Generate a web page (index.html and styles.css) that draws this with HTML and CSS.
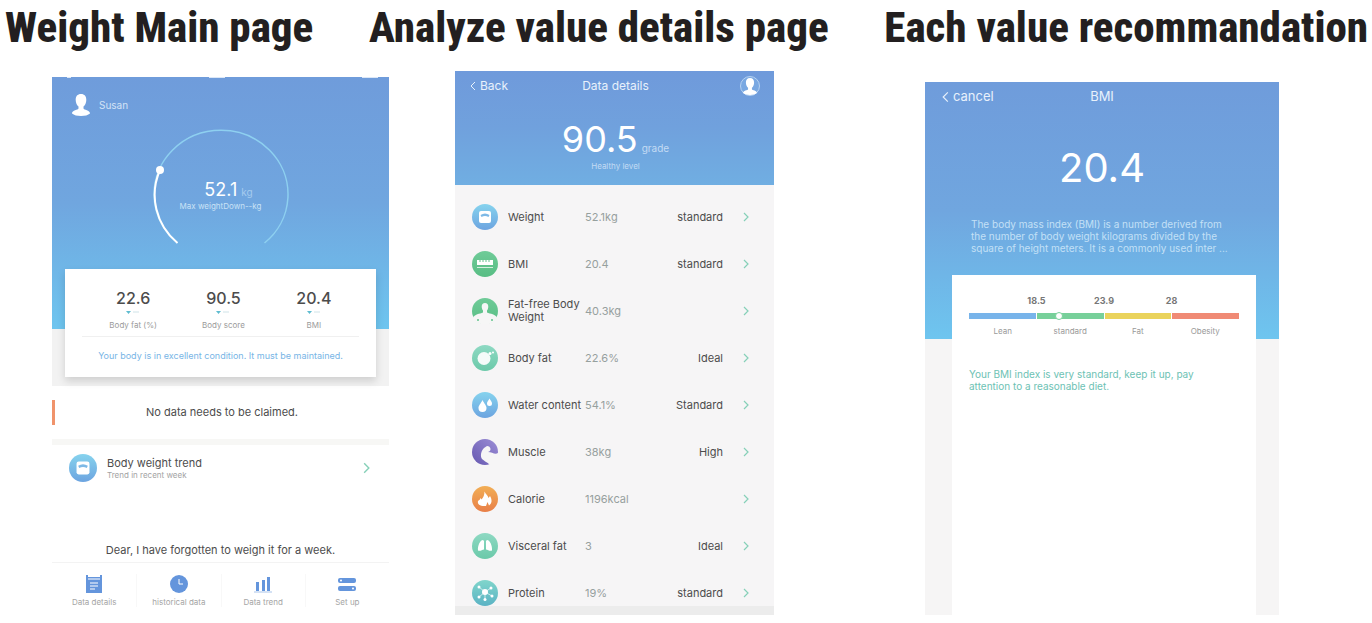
FILE: index.html
```html
<!DOCTYPE html>
<html lang="en">
<head>
  <meta charset="UTF-8" />
  <meta name="viewport" content="width=device-width, initial-scale=1.0" />
  <title>Weight app screens</title>
  <link rel="stylesheet" href="styles.css">
</head>
<body>
  <!-- shared shapes -->
  <svg class="defs" width="0" height="0">
    <defs>
      <linearGradient id="blue" x1="0" y1="0" x2="0" y2="1"><stop offset="0" stop-color="#86d3ee"/><stop offset="1" stop-color="#6ca4e0"/></linearGradient>
      <linearGradient id="green" x1="0" y1="0" x2="0" y2="1"><stop offset="0" stop-color="#6fcb98"/><stop offset="1" stop-color="#58bd84"/></linearGradient>
      <linearGradient id="mint" x1="0" y1="0" x2="0" y2="1"><stop offset="0" stop-color="#8ed9c3"/><stop offset="1" stop-color="#6bc9a9"/></linearGradient>
      <linearGradient id="purple" x1="1" y1="0" x2="0" y2="1"><stop offset="0" stop-color="#9c8ed6"/><stop offset="1" stop-color="#6658b0"/></linearGradient>
      <linearGradient id="orange" x1="0" y1="0" x2="0" y2="1"><stop offset="0" stop-color="#f2ae55"/><stop offset="1" stop-color="#e87f48"/></linearGradient>
      <linearGradient id="teal" x1="0" y1="0" x2="0" y2="1"><stop offset="0" stop-color="#80d5cb"/><stop offset="1" stop-color="#5bb3c4"/></linearGradient>
      <symbol id="person" viewBox="0 0 18 22">
        <path d="M9 0C5.500 0 3.600 2.200 3.700 6c0 3 1.300 5.200 2.800 6.600v1.900C6.200 16 0 16 0 19.500 2 21.200 5 22 9 22s7-.8 9-2.500C18 16 11.800 16 11.500 14.500v-1.900C13 11.200 14.300 9 14.300 6 14.400 2.200 12.500 0 9 0z"/>
      </symbol>
      <symbol id="scale" viewBox="0 0 26 26">
        <circle cx="13" cy="13" r="13" fill="url(#blue)"/>
        <rect x="7" y="7" width="12" height="12" rx="2" fill="#fff"/>
        <path d="M8.500 11q4.500-3 9 0l-1 2q-3.500-2-7 0z" fill="#7db9e6"/>
      </symbol>
      <symbol id="chevron" viewBox="0 0 6 10">
        <path d="M1 1l4 4-4 4" fill="none" stroke="currentColor" stroke-width="1.200"/>
      </symbol>
    </defs>
  </svg>

  <header class="titles">
    <h2>Weight Main page</h2>
    <h2>Analyze value details page</h2>
    <h2>Each value recommandation</h2>
  </header>

  <main class="screens">

    <!-- main page -->
    <section class="screen-main">
      <div class="hero">
        <div class="status-bar"><i></i><i></i><i></i></div>
        <div class="user">
          <svg width="18" height="22" fill="#fff"><use href="#person"/></svg>
          <span>Susan</span>
        </div>
        <div class="gauge">
          <svg width="138" height="116" viewBox="0 0 138 116" fill="none">
            <path d="M25.500 114A67 64 0 1 1 112.500 114" stroke="#8ed0f0" stroke-width="1.500"/>
            <path d="M25.500 114A67 64 0 0 1 8 41" stroke="#fff" stroke-width="2"/>
            <circle cx="8" cy="41" r="4" fill="#fff"/>
          </svg>
          <div class="gauge-text">
            <p class="gauge-value">52.1<span>kg</span></p>
            <p class="gauge-note">Max weightDown--kg</p>
          </div>
        </div>
      </div>

      <div class="card-area">
        <div class="card">
          <div class="stats">
            <div class="stat">
              <strong>22.6</strong>
              <svg width="16" height="4"><path d="M1 1h5L3.500 4z" fill="#5fbcd0"/><path d="M8 2h6" stroke="#cfe3e8"/></svg>
              <span>Body fat (%)</span>
            </div>
            <div class="stat">
              <strong>90.5</strong>
              <svg width="16" height="4"><path d="M1 1h5L3.500 4z" fill="#5fbcd0"/><path d="M8 2h6" stroke="#cfe3e8"/></svg>
              <span>Body score</span>
            </div>
            <div class="stat">
              <strong>20.4</strong>
              <svg width="16" height="4"><path d="M1 1h5L3.500 4z" fill="#5fbcd0"/><path d="M8 2h6" stroke="#cfe3e8"/></svg>
              <span>BMI</span>
            </div>
          </div>
          <p class="card-note">Your body is in excellent condition. It must be maintained.</p>
        </div>
      </div>

      <p class="claim">No data needs to be claimed.</p>

      <a class="trend" href="#">
        <svg width="28" height="28"><use href="#scale"/></svg>
        <span class="trend-text"><b>Body weight trend</b><small>Trend in recent week</small></span>
        <svg class="chevron" width="7" height="12"><use href="#chevron"/></svg>
      </a>

      <p class="reminder">Dear, I have forgotten to weigh it for a week.</p>

      <nav class="tabs">
        <a href="#">
          <svg width="18" height="20" viewBox="0 0 18 20"><path d="M1 1h2v2h12V1h2v18H1z" fill="#6495dc"/><path d="M3 5h12M5 9h8M5 12h8M5 15h5" stroke="#fff" stroke-width="1.200"/></svg>
          Data details
        </a>
        <a href="#">
          <svg width="18" height="20" viewBox="0 0 18 20"><circle cx="9" cy="10" r="9" fill="#6495dc"/><path d="M9 5v5h4" fill="none" stroke="#fff"/></svg>
          historical data
        </a>
        <a href="#">
          <svg width="18" height="20" viewBox="0 0 18 20"><path d="M2 8h3v9H2zM8 6h3v11H8zM13 3h3v14h-3z" fill="#6495dc"/><path d="M0 18h18" stroke="#a9c4ea"/></svg>
          Data trend
        </a>
        <a href="#">
          <svg width="20" height="20" viewBox="0 0 20 20"><rect x="1" y="4" width="18" height="5" rx="2" fill="#6495dc"/><rect x="1" y="12" width="18" height="5" rx="2" fill="#6495dc"/><circle cx="4" cy="6.500" r="1" fill="#fff"/><circle cx="16" cy="14.500" r="1" fill="#fff"/></svg>
          Set up
        </a>
      </nav>
    </section>

    <!-- value details -->
    <section class="screen-details">
      <div class="hero">
        <div class="topbar">
          <button type="button"><svg width="6" height="10" viewBox="0 0 6 10"><path d="M5 1L1 5l4 4" fill="none" stroke="currentColor"/></svg>Back</button>
          <h3>Data details</h3>
          <svg class="profile" width="22" height="22" viewBox="0 0 22 22"><circle cx="11" cy="11" r="9.500" fill="#79a8e2" stroke="#b6d2f1"/><use href="#person" x="4" y="3" width="14" height="17" fill="#fff"/></svg>
        </div>
        <p class="score">90.5<span>grade</span></p>
        <p class="level">Healthy level</p>
      </div>

      <ul class="values">
        <li><a href="#">
          <svg width="26" height="26"><use href="#scale"/></svg>
          <span>Weight</span><em>52.1kg</em><b>standard</b>
          <svg class="chevron" width="6" height="10"><use href="#chevron"/></svg>
        </a></li>
        <li><a href="#">
          <svg width="26" height="26" viewBox="0 0 26 26"><circle cx="13" cy="13" r="13" fill="url(#green)"/><path d="M5 9h16v5H5z" fill="#fff"/><path d="M8 9v2M11 9v2M14 9v2M17 9v2" stroke="#62c38d"/><path d="M5 16.500h16" stroke="#d5f0e0"/></svg>
          <span>BMI</span><em>20.4</em><b>standard</b>
          <svg class="chevron" width="6" height="10"><use href="#chevron"/></svg>
        </a></li>
        <li><a href="#">
          <svg width="26" height="26" viewBox="0 0 26 26"><circle cx="13" cy="13" r="13" fill="url(#green)"/><path d="M13 5c-2.500 0-3.600 1.800-3.200 4.500.2 1.500.8 2.500 1.200 3v2C8 16 2 16 1 20c2 4 7 6.500 12 6.500S23 24 25 20c-1-4-7-4-10-5.500v-2c.4-.5 1-1.500 1.200-3C16.600 6.800 15.500 5 13 5z" fill="#f6f6f6"/><circle cx="6" cy="22" r="1" fill="#62c38d"/><circle cx="20" cy="22" r="1" fill="#62c38d"/></svg>
          <span>Fat-free Body Weight</span><em>40.3kg</em><b></b>
          <svg class="chevron" width="6" height="10"><use href="#chevron"/></svg>
        </a></li>
        <li><a href="#">
          <svg width="26" height="26" viewBox="0 0 26 26"><circle cx="13" cy="13" r="13" fill="url(#mint)"/><circle cx="12" cy="13.500" r="6.500" fill="#f4fbf9"/><circle cx="18" cy="8.500" r="1.500" fill="#fff"/><circle cx="21" cy="7.500" r="1" fill="#fff"/></svg>
          <span>Body fat</span><em>22.6%</em><b>Ideal</b>
          <svg class="chevron" width="6" height="10"><use href="#chevron"/></svg>
        </a></li>
        <li><a href="#">
          <svg width="26" height="26" viewBox="0 0 26 26"><circle cx="13" cy="13" r="13" fill="url(#blue)"/><path d="M10.500 8c2 4 4 5.500 4 8a4 4 0 0 1-8 0c0-2.500 2-4 4-8zM17.500 6.500c1.200 2.500 2.500 3.300 2.500 5a2.500 2.500 0 0 1-5 0c0-1.700 1.300-2.500 2.500-5z" fill="#fff"/></svg>
          <span>Water content</span><em>54.1%</em><b>Standard</b>
          <svg class="chevron" width="6" height="10"><use href="#chevron"/></svg>
        </a></li>
        <li><a href="#">
          <svg width="26" height="26" viewBox="0 0 26 26"><circle cx="13" cy="13" r="13" fill="url(#purple)"/><path d="M26 14c-3 2-6-1-10-1 4-1 3-6-1-6l-3 2c-3 3-4 8-2 11 2 2 5 3 8 6h8z" fill="#f6f5f6"/></svg>
          <span>Muscle</span><em>38kg</em><b>High</b>
          <svg class="chevron" width="6" height="10"><use href="#chevron"/></svg>
        </a></li>
        <li><a href="#">
          <svg width="26" height="26" viewBox="0 0 26 26"><circle cx="13" cy="13" r="13" fill="url(#orange)"/><path d="M12.500 5.500c1 2.500 3.500 4 4 6.500l1.500-2c2 3.500 2.500 7-1 9.500l-1.500-3.500-1.500 4C8.500 20.500 5 18.500 6 15c1.500-1 2-1.500 2.500-3l1 1.500c2-2 3-5 3-8z" fill="#fff"/></svg>
          <span>Calorie</span><em>1196kcal</em><b></b>
          <svg class="chevron" width="6" height="10"><use href="#chevron"/></svg>
        </a></li>
        <li><a href="#">
          <svg width="26" height="26" viewBox="0 0 26 26"><circle cx="13" cy="13" r="13" fill="url(#mint)"/><path d="M11 7c-3 0-5.500 6-5 10.500 2 1 4-.5 6-1V8zM15 7c3 0 5.500 6 5 10.500-2 1-4-.5-6-1V8z" fill="#fff"/></svg>
          <span>Visceral fat</span><em>3</em><b>Ideal</b>
          <svg class="chevron" width="6" height="10"><use href="#chevron"/></svg>
        </a></li>
        <li><a href="#">
          <svg width="26" height="26" viewBox="0 0 26 26"><circle cx="13" cy="13" r="13" fill="url(#teal)"/><path d="M13 12L7 7M13 12l6-4M13 12l-6 5M13 12l7 4M13 12v7" stroke="#cdebee"/><g fill="#fff"><circle cx="13" cy="12" r="3"/><circle cx="7" cy="7" r="1.500"/><circle cx="19" cy="8" r="1.500"/><circle cx="7" cy="17" r="1.500"/><circle cx="20" cy="16" r="1.500"/><circle cx="13" cy="19.500" r="1.500"/></g></svg>
          <span>Protein</span><em>19%</em><b>standard</b>
          <svg class="chevron" width="6" height="10"><use href="#chevron"/></svg>
        </a></li>
      </ul>
    </section>

    <!-- BMI recommendation -->
    <section class="screen-bmi">
      <div class="hero">
        <div class="topbar">
          <button type="button"><svg width="7" height="12" viewBox="0 0 6 10"><path d="M5 1L1 5l4 4" fill="none" stroke="currentColor"/></svg>cancel</button>
          <h3>BMI</h3>
        </div>
        <p class="bmi-value">20.4</p>
        <p class="about">The body mass index (BMI) is a number derived from the number of body weight kilograms divided by the square of height meters. It is a commonly used inter ...</p>
      </div>
      <div class="advice-area">
        <div class="advice">
          <div class="limits"><span>18.5</span><span>23.9</span><span>28</span></div>
          <div class="range"><i class="lean"></i><i class="standard"></i><i class="fat"></i><i class="obesity"></i><span class="marker"></span></div>
          <div class="names"><span>Lean</span><span>standard</span><span>Fat</span><span>Obesity</span></div>
          <p>Your BMI index is very standard, keep it up, pay attention to a reasonable diet.</p>
        </div>
      </div>
    </section>

  </main>
</body>
</html>
```
FILE: styles.css
```css
* {
  box-sizing: border-box;
}
body {
  margin: 0;
  font-family: Inter, "Liberation Sans", sans-serif;
  background: #fff;
  color: #4c4c4c;
}
h2, h3, p, ul {
  margin: 0;
  padding: 0;
}
a {
  color: inherit;
  text-decoration: none;
}
svg {
  display: block;
  flex-shrink: 0;
}
.defs {
  position: absolute;
}

.titles {
  display: flex;
  justify-content: space-between;
  padding: 2px 4px 8px 5px;
}
.titles h2 {
  font-family: "Liberation Sans Narrow", "Roboto Condensed", "Open Sans Condensed", "DejaVu Sans Condensed", sans-serif;
  font-size: 43px;
  line-height: 50px;
  font-weight: 800;
  white-space: nowrap;
  color: #231f20;
}

.screens {
  display: grid;
  grid-template-columns: 52fr 337fr 66fr 319fr 151fr 354fr 93fr;
  align-items: start;
}
.screen-main {
  grid-column: 2;
  margin-top: 17px;
}
.screen-details {
  grid-column: 4;
  margin-top: 11px;
}
.screen-bmi {
  grid-column: 6;
  margin-top: 22px;
}
.hero {
  background: linear-gradient(#6f9cdb, #70a6df 50%, #6ec5ef);
  color: #fff;
}
.chevron {
  color: #86d0b8;
}

/* main page */
.screen-main .hero {
  padding-bottom: 84px;
}
.status-bar {
  display: flex;
  justify-content: space-between;
  padding: 0 11px 0 15px;
}
.status-bar i {
  width: 4px;
  height: 1px;
  background: #dbe7f7;
}
.status-bar i + i {
  width: 16px;
}
.user {
  display: flex;
  align-items: center;
  gap: 9px;
  padding: 16px 20px 0;
  font-size: 10px;
  line-height: 22px;
  color: #d3e3f6;
}
.gauge {
  display: grid;
  justify-items: center;
  padding-top: 13px;
}
.gauge > * {
  grid-area: 1 / 1;
}
.gauge-text {
  padding-top: 50px;
  text-align: center;
}
.gauge-value {
  padding-left: 16px;
  font-size: 18px;
  line-height: 22px;
}
.gauge-value span {
  margin-left: 4px;
  font-size: 10px;
  line-height: 10px;
  color: #a5cbee;
}
.gauge-note {
  font-size: 8px;
  line-height: 10px;
  color: #c9e2f6;
}
.card-area {
  display: flex;
  background: #f2f2f2;
}
.card {
  flex: 1;
  margin: -60px 13px 9px;
  padding: 19px 17px 14px;
  background: #fff;
  box-shadow: 0 4px 8px rgba(0, 0, 0, 0.15);
  text-align: center;
}
.stats {
  display: grid;
  grid-template-columns: repeat(3, 1fr);
  padding: 0 0 6px 6px;
  border-bottom: 1px solid #f0f0f0;
}
.stat {
  display: flex;
  flex-direction: column;
  align-items: center;
}
.stat strong {
  font-size: 16px;
  line-height: 20px;
  font-weight: 500;
}
.stat svg {
  margin: 2px 0 6px;
}
.stat span {
  font-size: 8px;
  line-height: 10px;
  color: #9b9b9b;
}
.card-note {
  padding-top: 11px;
  font-size: 9px;
  line-height: 15px;
  white-space: nowrap;
  color: #78b5e6;
}
.claim {
  margin: 14px 0;
  border-left: 3px solid #f0936b;
  font-size: 11px;
  line-height: 25px;
  text-align: center;
}
.trend {
  display: flex;
  align-items: center;
  gap: 10px;
  padding: 9px 19px 9px 17px;
  border-top: 6px solid #f7f7f5;
}
.trend-text {
  flex: 1;
}
.trend b,
.trend small {
  display: block;
  font-weight: normal;
}
.trend b {
  font-size: 11px;
  line-height: 14px;
}
.trend small {
  font-size: 8px;
  line-height: 10px;
  color: #a3a3a3;
}
.reminder {
  padding: 51px 0 4px;
  font-size: 11px;
  line-height: 16px;
  text-align: center;
}
.tabs {
  display: grid;
  grid-template-columns: repeat(4, 1fr);
  padding-top: 11px;
  border-top: 1px solid #f3f3f3;
}
.tabs a {
  display: flex;
  flex-direction: column;
  align-items: center;
  gap: 3px;
  font-size: 8px;
  line-height: 10px;
  color: #a5a5a5;
}
.tabs a + a {
  border-left: 1px solid #f8f8f8;
}

/* value details */
.topbar {
  display: grid;
  grid-template-columns: 1fr auto 1fr;
  align-items: center;
  color: #e8f1fb;
}
.topbar button {
  display: flex;
  align-items: center;
  gap: 4px;
  padding: 0;
  border: 0;
  background: none;
  font: inherit;
  color: inherit;
}
.topbar h3 {
  font-weight: normal;
  font-size: inherit;
}
.profile {
  justify-self: end;
}
.screen-details {
  background: #f6f5f6;
  border-bottom: 9px solid #ececec;
}
.screen-details .hero {
  padding: 4px 13px 14px 15px;
  background: linear-gradient(#6f9adb, #70a1dd 50%, #70aee2);
  text-align: center;
}
.screen-details .topbar {
  font-size: 12px;
  line-height: 22px;
}
.score {
  padding-top: 20px;
  font-size: 36px;
  line-height: 44px;
}
.score span {
  margin-left: 4px;
  font-size: 10px;
  line-height: 10px;
  color: #c3dbf4;
}
.level {
  font-size: 8px;
  line-height: 10px;
  color: #c3dbf4;
}
.values {
  display: grid;
  gap: 21px;
  padding-top: 19px;
  list-style: none;
  font-size: 11px;
  line-height: 13px;
}
.values a {
  display: grid;
  grid-template-columns: 26px 77px 1fr auto 26px;
  align-items: center;
  padding: 0 25px 0 17px;
}
.values span {
  margin: 0 -9px 0 10px;
}
.values em {
  padding-left: 10px;
  font-style: normal;
  color: #96a09e;
}
.values b {
  font-weight: normal;
}
.values .chevron {
  justify-self: end;
}

/* BMI recommendation */
.screen-bmi .hero {
  padding: 3px 17px 85px;
}
.screen-bmi .topbar {
  font-size: 13px;
  line-height: 23px;
}
.bmi-value {
  padding-top: 36px;
  font-size: 40px;
  line-height: 48px;
  text-align: center;
}
.about {
  padding: 26px 24px 0 29px;
  font-size: 10px;
  line-height: 12px;
  color: #c3e0f6;
}
.advice-area {
  display: flex;
  background: #f6f5f5;
}
.advice {
  flex: 1;
  margin: -64px 23px 0 27px;
  padding: 20px 17px 223px;
  background: #fff;
}
.limits {
  display: grid;
  grid-template-columns: 1fr 2fr 2fr 2fr 1fr;
  font-size: 9px;
  line-height: 12px;
  font-weight: bold;
  text-align: center;
  color: #777;
}
.limits span:first-child {
  grid-column: 2;
}
.range {
  position: relative;
  display: grid;
  grid-template-columns: repeat(4, 1fr);
  gap: 1px;
  margin-top: 6px;
}
.range i {
  height: 6px;
}
.lean {
  background: #78b4ea;
}
.standard {
  background: #77d09a;
}
.fat {
  background: #ead35c;
}
.obesity {
  background: #f08a75;
}
.marker {
  position: absolute;
  top: -1px;
  left: 32%;
  width: 8px;
  height: 8px;
  border: 1px solid #77d09a;
  border-radius: 50%;
  background: #fff;
}
.names {
  display: grid;
  grid-template-columns: repeat(4, 1fr);
  margin-top: 6px;
  font-size: 8px;
  line-height: 12px;
  text-align: center;
  color: #999;
}
.advice p {
  padding: 31px 24px 0 0;
  font-size: 10px;
  line-height: 12px;
  color: #6dc2b4;
}
```
